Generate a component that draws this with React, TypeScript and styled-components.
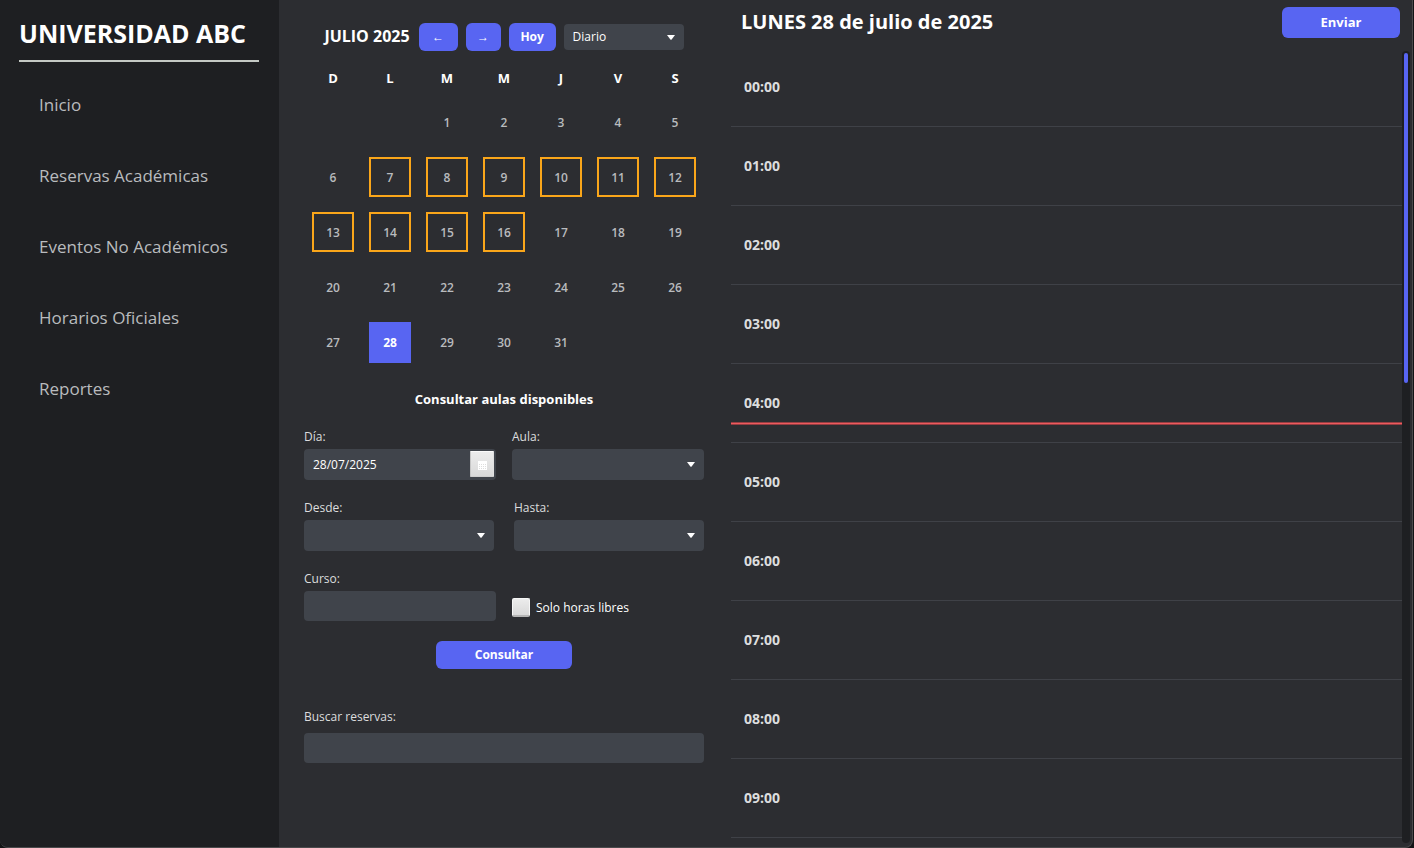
import React, { useLayoutEffect, useRef, useState } from 'react';
import styled, { createGlobalStyle, css } from 'styled-components';

const color = {
  sidebar: '#1e1f22',
  surface: '#2c2d31',
  field: '#40444b',
  accent: '#5865f2',
  reserved: '#faa61a',
  line: '#3f4147',
  now: '#ed5a5e',
  nowEdge: '#973e42',
  text: '#ffffff',
  soft: '#dcddde',
  muted: '#b9bbbe',
};

const GlobalStyle = createGlobalStyle`
  *, *::before, *::after { box-sizing: border-box; }
  body {
    margin: 0;
    background: #131416;
    color: ${color.text};
    font-family: 'Open Sans', 'Noto Sans', sans-serif;
    font-size: 12px;
  }
  button, input, select { font: inherit; color: inherit; }
`;

const Window = styled.div`
  display: flex;
  height: 100vh;
  min-height: 780px;
  padding-right: 1px;
  background: #131416;
`;

const Frame = styled.div`
  display: flex;
  flex: 1;
  min-width: 0;
  overflow: hidden;
  background: ${color.surface};
  border: 0 solid #4a4a4c;
  border-width: 0 1px 1px 0;
  border-radius: 0 0 8px 8px;
`;

const Sidebar = styled.aside`
  flex: 0 0 279px;
  padding: 16px 20px 16px 19px;
  background: ${color.sidebar};
`;

const Brand = styled.h1`
  margin: 0;
  padding-bottom: 10px;
  border-bottom: 2px solid #c4c9c4;
  font-size: 25px;
  line-height: 34px;
  font-weight: 700;
  white-space: nowrap;
`;

const Menu = styled.nav`
  display: flex;
  flex-direction: column;
  gap: 35px;
  padding: 25px 0 0 20px;
`;

const MenuLink = styled.a`
  color: ${color.muted};
  font-size: 17px;
  line-height: 36px;
  text-decoration: none;
  white-space: nowrap;
`;

const Planner = styled.section`
  display: flex;
  flex-direction: column;
  flex: 0 0 452px;
  padding: 23px 27px 0 25px;
`;

const Toolbar = styled.div`
  display: flex;
  align-items: center;
  justify-content: center;
  gap: 8px;
  height: 28px;
`;

const Month = styled.h2`
  margin: 0;
  padding: 0 1px 2px 0;
  font-size: 16px;
  line-height: 26px;
  font-weight: 700;
  white-space: nowrap;
`;

const Button = styled.button<{ $width: number; $tall?: boolean }>`
  flex: none;
  width: ${(p) => p.$width}px;
  height: ${(p) => (p.$tall ? 31 : 28)}px;
  padding: 0 0 2px;
  border: 0;
  border-radius: 6px;
  background: ${color.accent};
  font-size: ${(p) => (p.$tall ? 13 : 12)}px;
  font-weight: 700;
  cursor: pointer;
`;

const Calendar = styled.table`
  width: 399px;
  margin-top: 10px;
  table-layout: fixed;
  border-spacing: 0;
`;

const WeekDay = styled.th`
  height: 34px;
  padding: 0 0 0 1px;
  font-size: 13px;
  font-weight: 700;
`;

const DayCell = styled.td`
  height: 55px;
  padding: 7px 7px 8px 8px;
`;

const Day = styled.button<{ $reserved: boolean; $today: boolean }>`
  display: block;
  width: 42px;
  height: 40px;
  padding: 0;
  border: 2px solid transparent;
  background: none;
  color: ${color.muted};
  font-size: 12px;
  font-weight: 600;
  cursor: pointer;
  ${(p) => p.$reserved && css`border-color: ${color.reserved};`}
  ${(p) =>
    p.$today &&
    css`
      border-color: ${color.accent};
      background: ${color.accent};
      color: ${color.text};
      font-weight: 700;
      box-shadow: 0 1px 0 ${color.accent};
    `}
`;

const FormTitle = styled.h3`
  margin: 20px 0;
  font-size: 13px;
  line-height: 18px;
  font-weight: 700;
  text-align: center;
`;

const Form = styled.form`
  display: flex;
  flex-direction: column;
`;

const Row = styled.div<{ $gap: number }>`
  display: flex;
  gap: ${(p) => p.$gap}px;
  margin-bottom: 19px;
`;

const Field = styled.div<{ $gap?: number }>`
  display: flex;
  flex: 1 1 0;
  flex-direction: column;
  gap: ${(p) => p.$gap ?? 4}px;
  min-width: 0;
`;

const Label = styled.label`
  color: ${color.soft};
  font-size: 12px;
  line-height: 17px;
`;

const TextInput = styled.input`
  width: 100%;
  height: 30px;
  padding: 0 9px;
  border: 0;
  border-radius: 4px;
  background: ${color.field};
`;

const DateBox = styled.div`
  display: flex;
  height: 31px;
  padding: 2px;
  border-radius: 4px;
  background: ${color.field};
`;

const DateInput = styled.input`
  flex: 1;
  min-width: 0;
  padding: 0 7px;
  border: 0;
  background: none;
`;

const DateButton = styled.button`
  display: grid;
  place-items: center;
  width: 24px;
  height: 26px;
  padding: 2px 0 0;
  border: 1px solid;
  border-color: #fafafa #e0e0e0 #cfcfcf #c6c6c6;
  border-radius: 1px;
  background: linear-gradient(#ececec, #d9d9d9);
`;

const SelectBox = styled.div<{ $compact?: boolean }>`
  position: relative;
  flex: none;
  width: ${(p) => (p.$compact ? '120px' : '100%')};
  height: ${(p) => (p.$compact ? 26 : 31)}px;
`;

const Select = styled.select`
  width: 100%;
  height: 100%;
  padding: 0 24px 1px 9px;
  border: 0;
  border-radius: 4px;
  background: ${color.field};
  appearance: none;
`;

const Caret = styled.svg`
  position: absolute;
  top: 0;
  bottom: 0;
  right: 9px;
  width: 8px;
  height: 5px;
  margin: auto 0;
  pointer-events: none;
`;

const CheckLabel = styled.label`
  display: flex;
  flex: 1 1 0;
  align-items: center;
  gap: 6px;
  height: 19px;
  margin-top: 28px;
  white-space: nowrap;
`;

const CheckBox = styled.input`
  width: 18px;
  height: 19px;
  margin: 0;
  border: 1px solid #f6f6f6;
  border-bottom: 2px solid #b5b5b5;
  border-radius: 2px;
  background: linear-gradient(#ececec, #d9d9d9);
  appearance: none;
  &:checked { background: ${color.accent}; }
`;

const Submit = styled.div`
  display: flex;
  justify-content: center;
  padding: 1px 0 39px;
`;

const Agenda = styled.main`
  display: flex;
  flex: 1;
  flex-direction: column;
  min-width: 0;
  padding-bottom: 4px;
`;

const AgendaHeader = styled.header`
  display: flex;
  align-items: flex-start;
  justify-content: space-between;
  flex: 0 0 48px;
  padding: 7px 12px 0 10px;
`;

const AgendaTitle = styled.h2`
  margin: 0;
  font-size: 20px;
  line-height: 30px;
  font-weight: 700;
`;

const AgendaBody = styled.div`
  display: flex;
  flex: 1;
  min-height: 0;
`;

const Scroller = styled.div`
  flex: 1;
  overflow-y: auto;
  scrollbar-width: none;
`;

const FullDay = styled.div`
  position: relative;
`;

const Hours = styled.ul`
  margin: 0;
  padding: 0;
  list-style: none;
`;

const Hour = styled.li`
  display: flex;
  align-items: center;
  height: 79px;
  padding: 0 0 2px 13px;
  border-bottom: 1px solid ${color.line};
  color: ${color.soft};
  font-size: 14px;
  font-weight: 700;
`;

const NowLine = styled.div`
  position: absolute;
  left: 0;
  right: 0;
  height: 3px;
  border: 1px solid ${color.nowEdge};
  border-width: 1px 0;
  background: ${color.now};
`;

const Track = styled.div`
  flex: 0 0 8px;
  margin: 3px 2px 0 0;
  padding: 2px;
  border-radius: 4px;
  background: ${color.sidebar};
`;

const Rail = styled.div`
  position: relative;
  height: 100%;
`;

const Thumb = styled.div`
  position: absolute;
  left: 0;
  right: 0;
  border-radius: 2px;
  background: ${color.accent};
`;

const MENU = ['Inicio', 'Reservas Académicas', 'Eventos No Académicos', 'Horarios Oficiales', 'Reportes'];
const WEEK_DAYS = ['D', 'L', 'M', 'M', 'J', 'V', 'S'];
const FIRST_WEEK_DAY = 2;
const TODAY = 28;
const HOUR_HEIGHT = 79;
const DAY_HEIGHT = 24 * HOUR_HEIGHT;
const NOW_HOURS = 4.75;

const weeks = Array.from({ length: 5 }, (_, w) =>
  Array.from({ length: 7 }, (_, d) => {
    const day = w * 7 + d - FIRST_WEEK_DAY + 1;
    return day >= 1 && day <= 31 ? day : null;
  }),
);
const hours = Array.from({ length: 24 }, (_, h) => `${String(h).padStart(2, '0')}:00`);

function Dropdown({ id, value, label, compact }: { id: string; value: string; label?: string; compact?: boolean }) {
  return (
    <SelectBox $compact={compact}>
      <Select id={id} defaultValue={value} aria-label={label}>
        <option value={value}>{value}</option>
      </Select>
      <Caret viewBox="0 0 8 5" aria-hidden="true">
        <path d="M0 0H8L4.6 4.4Q4 5 3.4 4.4Z" fill="#fff" />
      </Caret>
    </SelectBox>
  );
}

function CalendarIcon() {
  return (
    <svg width="9" height="9" viewBox="0 0 9 9" aria-hidden="true">
      <rect width="9" height="9" fill="#fff" />
      {[3, 5, 7].map((y) => [1, 3, 5, 7].map((x) => (
        <rect key={`${x}-${y}`} x={x} y={y} width="1" height="1" fill="#dedede" />
      )))}
    </svg>
  );
}

// Only the hours whose label is inside the viewport are rendered.
function HourList() {
  const scroller = useRef<HTMLDivElement>(null);
  const [view, setView] = useState({ top: 0, height: 0 });

  const measure = () => {
    const el = scroller.current;
    if (el) setView({ top: el.scrollTop, height: el.clientHeight });
  };

  useLayoutEffect(() => {
    measure();
    window.addEventListener('resize', measure);
    return () => window.removeEventListener('resize', measure);
  }, []);

  const first = Math.round(view.top / HOUR_HEIGHT);
  const last = Math.round((view.top + view.height) / HOUR_HEIGHT);

  return (
    <AgendaBody>
      <Scroller ref={scroller} onScroll={measure}>
        <FullDay style={{ height: DAY_HEIGHT }}>
          <Hours style={{ paddingTop: first * HOUR_HEIGHT }}>
            {hours.slice(first, last).map((h) => <Hour key={h}>{h}</Hour>)}
          </Hours>
          <NowLine style={{ top: Math.floor(NOW_HOURS * HOUR_HEIGHT) - 1 }} />
        </FullDay>
      </Scroller>
      <Track>
        <Rail>
          <Thumb
            style={{
              top: `${(view.top / DAY_HEIGHT) * 100}%`,
              height: `${(view.height / DAY_HEIGHT) * 100}%`,
            }}
          />
        </Rail>
      </Track>
    </AgendaBody>
  );
}

export default function App() {
  return (
    <Window>
      <GlobalStyle />
      <Frame>
        <Sidebar>
          <Brand>UNIVERSIDAD ABC</Brand>
          <Menu>
            {MENU.map((item) => <MenuLink key={item} href="#">{item}</MenuLink>)}
          </Menu>
        </Sidebar>

        <Planner>
          <Toolbar>
            <Month>JULIO 2025</Month>
            <Button type="button" $width={39} aria-label="Mes anterior">←</Button>
            <Button type="button" $width={35} aria-label="Mes siguiente">→</Button>
            <Button type="button" $width={47}>Hoy</Button>
            <Dropdown id="vista" value="Diario" label="Vista" compact />
          </Toolbar>

          <Calendar>
            <thead>
              <tr>{WEEK_DAYS.map((d, i) => <WeekDay key={i} scope="col">{d}</WeekDay>)}</tr>
            </thead>
            <tbody>
              {weeks.map((week, w) => (
                <tr key={w}>
                  {week.map((day, d) => (
                    <DayCell key={d}>
                      {day && (
                        <Day type="button" $reserved={day >= 7 && day <= 16} $today={day === TODAY}>{day}</Day>
                      )}
                    </DayCell>
                  ))}
                </tr>
              ))}
            </tbody>
          </Calendar>

          <FormTitle>Consultar aulas disponibles</FormTitle>
          <Form onSubmit={(e) => e.preventDefault()}>
            <Row $gap={16}>
              <Field>
                <Label htmlFor="dia">Día:</Label>
                <DateBox>
                  <DateInput id="dia" defaultValue="28/07/2025" />
                  <DateButton type="button" aria-label="Elegir fecha"><CalendarIcon /></DateButton>
                </DateBox>
              </Field>
              <Field>
                <Label htmlFor="aula">Aula:</Label>
                <Dropdown id="aula" value="" />
              </Field>
            </Row>
            <Row $gap={20}>
              <Field>
                <Label htmlFor="desde">Desde:</Label>
                <Dropdown id="desde" value="" />
              </Field>
              <Field>
                <Label htmlFor="hasta">Hasta:</Label>
                <Dropdown id="hasta" value="" />
              </Field>
            </Row>
            <Row $gap={16}>
              <Field>
                <Label htmlFor="curso">Curso:</Label>
                <TextInput id="curso" />
              </Field>
              <CheckLabel>
                <CheckBox type="checkbox" />
                Solo horas libres
              </CheckLabel>
            </Row>
            <Submit>
              <Button type="submit" $width={136}>Consultar</Button>
            </Submit>
            <Field $gap={8}>
              <Label htmlFor="buscar">Buscar reservas:</Label>
              <TextInput id="buscar" />
            </Field>
          </Form>
        </Planner>

        <Agenda>
          <AgendaHeader>
            <AgendaTitle>LUNES 28 de julio de 2025</AgendaTitle>
            <Button type="button" $width={118} $tall>Enviar</Button>
          </AgendaHeader>
          <HourList />
        </Agenda>
      </Frame>
    </Window>
  );
}
